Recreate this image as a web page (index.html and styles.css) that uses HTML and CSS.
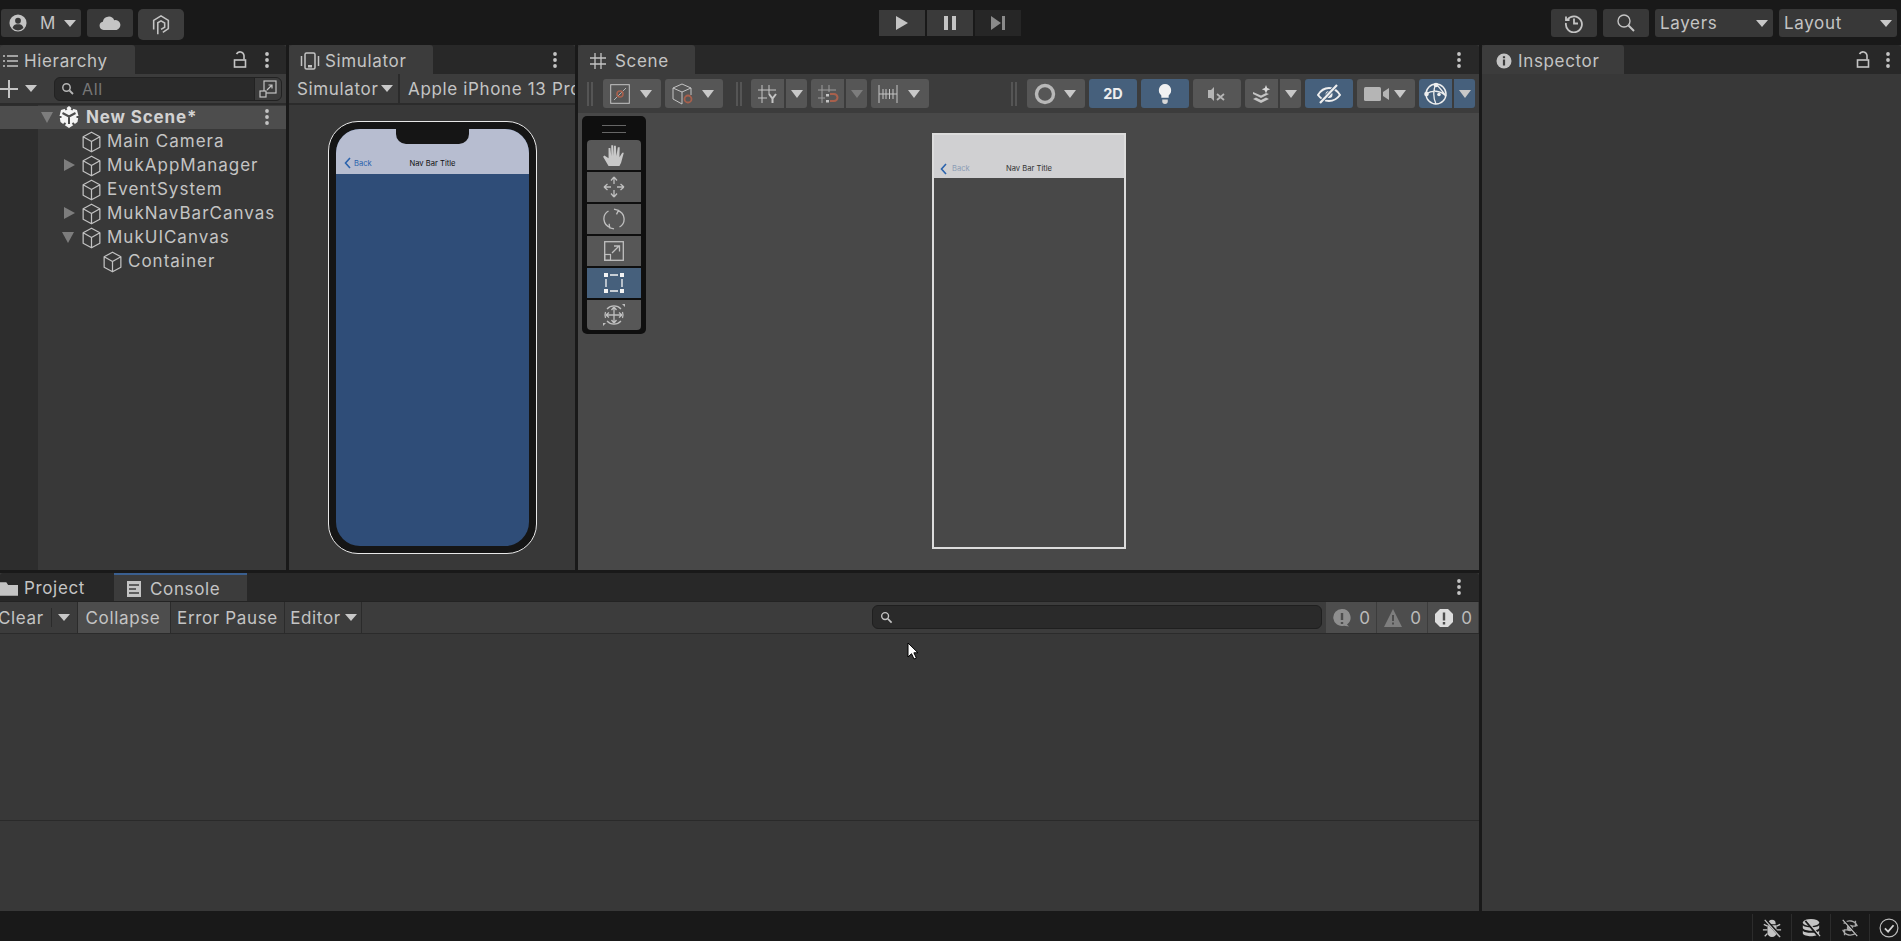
FILE: index.html
```html
<!DOCTYPE html>
<html lang="en">
<head>
<meta charset="utf-8">
<title>Unity Editor</title>
<link rel="stylesheet" href="styles.css">
</head>
<body>
<svg class="defs" width="0" height="0">
  <symbol id="cube" viewBox="0 0 20 23"><path d="M10 1.2 18.8 6v11L10 21.8 1.2 17V6ZM1.2 6 10 11l8.8-5M10 11v10.8" fill="none" stroke="#c2c2c2" stroke-width="1.3" stroke-linejoin="round"/></symbol>
  <symbol id="dots" viewBox="0 0 6 18"><circle cx="3" cy="3" r="1.9" fill="#c4c4c4"/><circle cx="3" cy="9" r="1.9" fill="#c4c4c4"/><circle cx="3" cy="15" r="1.9" fill="#c4c4c4"/></symbol>
  <symbol id="lock" viewBox="0 0 14 18"><path d="M11 8.500V4.500a4 4 0 0 0-7.500-1.500" fill="none" stroke="#c4c4c4" stroke-width="1.600"/><rect x="1.500" y="9" width="11" height="7" fill="none" stroke="#c4c4c4" stroke-width="1.600"/></symbol>
</svg>
<div class="app">
  <header class="topbar">
    <div class="top-left">
      <div class="tbtn acct">
        <svg class="i18" viewBox="0 0 20 20"><circle cx="10" cy="10" r="9.500" fill="#c4c4c4"/><circle cx="10" cy="7.500" r="3.200" fill="#383838"/><path d="M4 15.500c1-3.500 3.500-4 6-4s5 .5 6 4a8 8 0 0 1-12 0Z" fill="#383838"/></svg>
        <span class="acct-m">M</span>
        <i class="tri tri-sm"></i>
      </div>
      <div class="tbtn cloud">
        <svg class="i22" viewBox="0 0 24 18"><path d="M5 16.500a4.500 4.500 0 0 1-.8-8.900 6.500 6.500 0 0 1 12.400-1.600 5.300 5.300 0 0 1 2.600 10.500Z" fill="#c4c4c4"/></svg>
      </div>
      <div class="tbtn collab">
        <svg class="i22" viewBox="0 0 22 24"><path d="M3 17V7l8-5 8 5v9l-6 4" fill="none" stroke="#c4c4c4" stroke-width="1.700"/><path d="M7.500 22V9.500l3.500-2 4 2.300v4.700l-4 2.300" fill="none" stroke="#c4c4c4" stroke-width="1.700"/></svg>
      </div>
    </div>
    <div class="top-center">
      <div class="pbtn"><svg class="i16" viewBox="0 0 14 16"><path d="M1 1l12 7-12 7Z" fill="#c4c4c4"/></svg></div>
      <div class="pbtn"><svg class="i16" viewBox="0 0 14 16"><rect x="1" y="1" width="4" height="14" fill="#c4c4c4"/><rect x="9" y="1" width="4" height="14" fill="#c4c4c4"/></svg></div>
      <div class="pbtn pbtn-off"><svg class="i16" viewBox="0 0 16 16"><path d="M1 1l10 7-10 7Z" fill="#8a8a8a"/><rect x="12" y="1" width="3" height="14" fill="#8a8a8a"/></svg></div>
    </div>
    <div class="top-right">
      <div class="tbtn rbtn"><svg class="i20" viewBox="0 0 20 20"><path d="M3.500 6.500A8 8 0 1 1 2 10M2 3.500v3.500h3.500" fill="none" stroke="#c4c4c4" stroke-width="1.800"/><path d="M10 5.500V10.500H14" fill="none" stroke="#c4c4c4" stroke-width="1.800"/></svg></div>
      <div class="tbtn rbtn"><svg class="i20" viewBox="0 0 20 20"><circle cx="8" cy="8" r="6" fill="none" stroke="#c4c4c4" stroke-width="1.400"/><path d="M12.500 12.500 18 18" stroke="#c4c4c4" stroke-width="2"/></svg></div>
      <div class="tbtn sel"><span>Layers</span><i class="tri tri-sm"></i></div>
      <div class="tbtn sel"><span>Layout</span><i class="tri tri-sm"></i></div>
    </div>
  </header>

  <main class="workspace">
    <div class="left">
      <div class="upper">
        <section class="panel hierarchy">
          <div class="tabbar">
            <div class="tab tab-h">
              <svg class="i16 list" viewBox="0 0 16 14"><path d="M5 2h11M5 7h11M5 12h11" stroke="#c4c4c4" stroke-width="1.300"/><path d="M1 2h2M1 7h2M1 12h2" stroke="#c4c4c4" stroke-width="1.500"/></svg>
              <span>Hierarchy</span>
            </div>
            <div class="tab-actions">
              <svg class="lock" viewBox="0 0 14 18"><use href="#lock"/></svg>
              <svg class="dots" viewBox="0 0 6 18"><use href="#dots"/></svg>
            </div>
          </div>
          <div class="h-tools">
            <svg class="plus" viewBox="0 0 18 18"><path d="M9 0v18M0 9h18" stroke="#c4c4c4" stroke-width="2"/></svg>
            <i class="tri tri-sm plus-tri"></i>
            <div class="h-search">
              <svg class="mag" viewBox="0 0 14 14"><circle cx="5.500" cy="5.500" r="3.700" fill="none" stroke="#b5b5b5" stroke-width="1.500"/><path d="M8.500 8.500 12 12" stroke="#b5b5b5" stroke-width="1.800"/></svg>
              <span class="h-all">All</span>
              <div class="h-scope">
                <svg class="i18" viewBox="0 0 18 18"><rect x="5" y="1" width="12" height="12" fill="none" stroke="#c4c4c4" stroke-width="1.200"/><rect x="1" y="11" width="6" height="6" fill="#3c3c3c" stroke="#c4c4c4" stroke-width="1.200"/><path d="M8 10l5-5M9.500 5H13v3.500" fill="none" stroke="#c4c4c4" stroke-width="1.200"/></svg>
              </div>
            </div>
          </div>
          <div class="tree">
            <div class="row scene-row">
              <i class="tri tri-lg tri-dim"></i>
              <svg class="unity" viewBox="0 0 20 22"><path d="M10 0l3 2.500 5 1.500 1.500 6-1 6-4 3-4.500 3-4.500-3-4-3-1-6L2 4l5-1.500Z" fill="#f4f4f4"/><path d="M10 10.500 3.500 7M10 10.500 16.500 7M10 10.500V18M0 11h2.500M17.500 11H20M6 1.500 7.500 4M14 1.500 12.500 4M4.500 19 6.500 17M15.500 19 13.500 17" stroke="#4d4d4d" stroke-width="2"/></svg>
              <b>New Scene*</b>
              <svg class="dots row-dots" viewBox="0 0 6 18"><use href="#dots"/></svg>
            </div>
            <div class="row d1"><span class="noarrow"></span><svg class="cube"><use href="#cube"/></svg><span>Main Camera</span></div>
            <div class="row d1"><i class="tri-right"></i><svg class="cube"><use href="#cube"/></svg><span>MukAppManager</span></div>
            <div class="row d1"><span class="noarrow"></span><svg class="cube"><use href="#cube"/></svg><span>EventSystem</span></div>
            <div class="row d1"><i class="tri-right"></i><svg class="cube"><use href="#cube"/></svg><span>MukNavBarCanvas</span></div>
            <div class="row d1"><i class="tri tri-lg tri-dim arrow-down"></i><svg class="cube"><use href="#cube"/></svg><span>MukUICanvas</span></div>
            <div class="row d2"><svg class="cube"><use href="#cube"/></svg><span>Container</span></div>
          </div>
        </section>

        <section class="panel simulator">
          <div class="tabbar">
            <div class="tab tab-s">
              <svg class="i20 simi" viewBox="0 0 20 18"><rect x="5" y="1" width="10" height="16" rx="1.500" fill="none" stroke="#c4c4c4" stroke-width="1.500"/><rect x="8" y="13" width="4" height="2.500" fill="#c4c4c4"/><path d="M1.500 4v10M18.500 4v10" stroke="#c4c4c4" stroke-width="1.500"/></svg>
              <span>Simulator</span>
            </div>
            <div class="tab-actions">
              <svg class="dots" viewBox="0 0 6 18"><use href="#dots"/></svg>
            </div>
          </div>
          <div class="s-tools">
            <div class="s-drop"><span>Simulator</span><i class="tri tri-sm"></i></div>
            <div class="s-device">Apple iPhone 13 Pro</div>
          </div>
          <div class="s-body">
            <div class="phone">
              <div class="screen">
                <div class="notch"></div>
                <div class="nav nav-phone">
                  <div class="back">
                    <svg class="chev" viewBox="0 0 7 12"><path d="M6 1 1.500 6 6 11" fill="none" stroke="#2a63ad" stroke-width="1.600"/></svg>
                    <span>Back</span>
                  </div>
                  <div class="title">Nav Bar Title</div>
                </div>
              </div>
            </div>
          </div>
        </section>

        <section class="panel scene">
          <div class="tabbar">
            <div class="tab tab-sc">
              <svg class="i16" viewBox="0 0 16 16"><path d="M5 0v16M11 0v16M0 5h16M0 11h16" stroke="#c4c4c4" stroke-width="1.300"/></svg>
              <span>Scene</span>
            </div>
            <div class="tab-actions">
              <svg class="dots" viewBox="0 0 6 18"><use href="#dots"/></svg>
            </div>
          </div>
          <div class="sc-tools">
            <div class="grip"></div>
            <div class="b w58 first">
              <svg class="i20" viewBox="0 0 20 20"><rect x=".7" y=".7" width="18.600" height="18.600" fill="none" stroke="#c4c4c4" stroke-width="1"/><path d="M4 16 16 4" stroke="#b0b0b0"/><circle cx="10" cy="10" r="3" fill="none" stroke="#a8604c" stroke-width="1.600"/></svg>
              <i class="tri"></i>
            </div>
            <div class="b w58">
              <svg class="i22" viewBox="0 0 22 22"><path d="M10 1l9 4v7M10 1 1 5v11l9 5M1 5l9 4 9-4M10 9v12" fill="none" stroke="#c4c4c4" stroke-width="1"/><circle cx="16" cy="16" r="3.500" fill="none" stroke="#a8604c" stroke-width="1.800"/></svg>
              <i class="tri"></i>
            </div>
            <div class="grip g2"></div>
            <div class="b w33 g3">
              <svg class="i22" viewBox="0 0 22 20"><path d="M5 1v18M12 1v9M1 6h18M1 14h9" fill="none" stroke="#c4c4c4" stroke-width="1"/><path d="M12 10l3.500 4.500L19 10M15.500 14.500V19" fill="none" stroke="#c4c4c4" stroke-width="2"/></svg>
            </div>
            <div class="b w21 sp"><i class="tri"></i></div>
            <div class="b w33">
              <svg class="i22" viewBox="0 0 22 20"><path d="M5 1v18M12 1v7M1 6h18M1 14h7" fill="none" stroke="#9c9c9c" stroke-width="1"/><path d="M13 10h4a3 3 0 0 1 0 7h-4" fill="none" stroke="#a8604c" stroke-width="2"/><rect x="9" y="16" width="3" height="2.500" fill="#c4c4c4"/><rect x="9" y="10" width="3" height="2.500" fill="#c4c4c4"/></svg>
            </div>
            <div class="b w21 sp"><i class="tri tri-dim"></i></div>
            <div class="b w58">
              <svg class="i20" viewBox="0 0 20 20"><path d="M1 1v18M19 1v18M1 10h18M5 5v10M8 5v10M11.500 5v10M15 5v10" fill="none" stroke="#c4c4c4" stroke-width="1"/></svg>
              <i class="tri"></i>
            </div>
            <div class="spacer"></div>
            <div class="grip g4"></div>
            <div class="b w58">
              <svg class="i22" viewBox="0 0 22 22"><circle cx="11" cy="11" r="8.500" fill="none" stroke="#b8b8b8" stroke-width="3.400"/></svg>
              <i class="tri"></i>
            </div>
            <div class="b w48 on"><span class="b2d">2D</span></div>
            <div class="b w48 on ctr">
              <svg class="i22" viewBox="0 0 18 24"><path d="M9 1a7 7 0 0 1 4 12.500V16H5v-2.500A7 7 0 0 1 9 1Z" fill="#f1f1f1"/><path d="M6 18h6v2a3 3 0 0 1-6 0Z" fill="#d8d8d8"/></svg>
            </div>
            <div class="b w48 ctr">
              <svg class="i18" viewBox="0 0 18 14"><path d="M0 3h3l3-3v14l-3-3H0Z" fill="#b5b5b5"/><path d="M9 7l7 6M16 7l-7 6" stroke="#b5b5b5" stroke-width="1.800"/></svg>
            </div>
            <div class="b w33 ctr">
              <svg class="i22" viewBox="0 0 22 20"><path d="M2 10l8 4 8-4-3-1-5 2.500L2 8Zm0 5 8 4 8-4-3-1.500-5 2.500-5-2.500Z" fill="#c4c4c4"/><path d="M15 1l1.200 3 3 1.200-3 1.200L15 9.500l-1.200-3-3-1.200 3-1.200Z" fill="#d8d8d8"/></svg>
            </div>
            <div class="b w21 sp"><i class="tri"></i></div>
            <div class="b w48 on ctr">
              <svg class="i24" viewBox="0 0 24 20"><path d="M1 11c3-5 7-7 11-7s8 2 11 7c-3 4-7 6-11 6S4 15 1 11Z" fill="none" stroke="#eee" stroke-width="2"/><circle cx="12" cy="10.500" r="3.500" fill="#eee"/><path d="M3 19 20 1" stroke="#46607c" stroke-width="4"/><path d="M3 19 20 1" stroke="#eee" stroke-width="2.200"/></svg>
            </div>
            <div class="b w58">
              <svg class="camw" viewBox="0 0 26 18"><rect x="0" y="2" width="17" height="14" rx="1.500" fill="#b5b5b5"/><path d="M19 7l6-4v12l-6-4Z" fill="#b5b5b5"/></svg>
              <i class="tri"></i>
            </div>
            <div class="b w33 on ctr">
              <svg class="giz" viewBox="0 0 24 24"><circle cx="12" cy="12" r="10" fill="none" stroke="#eee" stroke-width="1.500"/><path d="M2 12c6-4 14-4 20 2M12 2c-3 5-3 14 0 20M12 2c4 4 7 8 10 12" fill="none" stroke="#eee" stroke-width="1.300"/><circle cx="12" cy="3" r="2.300" fill="#eee"/><circle cx="2.500" cy="12" r="2.300" fill="#eee"/><circle cx="15" cy="12.500" r="1.800" fill="#eee"/></svg>
            </div>
            <div class="b w21 sp on"><i class="tri"></i></div>
          </div>
          <div class="sc-body">
            <div class="tools">
              <div class="handle"></div>
              <div class="tool tool-top">
                <svg class="i24" viewBox="0 0 22 22"><path d="M6 21 1 12.500l1.200-1L6 14V4.500h1.700L8.500 12V2h1.700L11 12V2.500h1.700l.5 9.500 1.300-8h1.700L16 13l2.500-4H20l-2.500 9L16 21Z" fill="#c8c8c8"/></svg>
              </div>
              <div class="tool">
                <svg class="i24" viewBox="0 0 24 24"><path d="M12 2v7M12 15v7M2 12h7M15 12h7M12 2 9 5.500M12 2l3 3.500M12 22l-3-3.500M12 22l3-3.500M2 12l3.500-3M2 12l3.500 3M22 12l-3.500-3M22 12l-3.500 3" fill="none" stroke="#bfbfbf" stroke-width="1.300"/></svg>
              </div>
              <div class="tool">
                <svg class="i22" viewBox="0 0 22 22"><path d="M14.500 2.500a9 9 0 0 1 2 16.500M7.500 19.500a9 9 0 0 1-2-16.500M11 1.200l4.500 1.200-2 4M11 20.800l-4.500-1-.3-4" fill="none" stroke="#bfbfbf" stroke-width="1.300"/></svg>
              </div>
              <div class="tool">
                <svg class="i20" viewBox="0 0 20 20"><rect x=".7" y=".7" width="18.600" height="18.600" fill="none" stroke="#bfbfbf" stroke-width="1.300"/><rect x=".7" y="13.500" width="5.800" height="5.800" fill="none" stroke="#bfbfbf" stroke-width="1.200"/><path d="M8 12l7-7M10 5h5.500V10.500" fill="none" stroke="#bfbfbf" stroke-width="1.300"/></svg>
              </div>
              <div class="tool tool-on">
                <svg class="i22" viewBox="0 0 22 22"><path d="M7 3h8M7 19h8M3 7v8M19 7v8" stroke="#f4f4f4" stroke-width="1.300"/><rect x="1" y="1" width="4" height="4" fill="#f4f4f4"/><rect x="17" y="1" width="4" height="4" fill="#f4f4f4"/><rect x="1" y="17" width="4" height="4" fill="#f4f4f4"/><rect x="17" y="17" width="4" height="4" fill="#f4f4f4"/></svg>
              </div>
              <div class="tool tool-bot">
                <svg class="i24" viewBox="0 0 24 24"><path d="M5 6a9.500 9.500 0 0 1 14 0M19 18a9.500 9.500 0 0 1-14 0M3.500 9a9.500 9.500 0 0 0 0 6M20.500 9a9.500 9.500 0 0 1 0 6" fill="none" stroke="#bfbfbf" stroke-width="1.200"/><path d="M12 4v16M4 12h16M12 4 9.500 7M12 4l2.500 3M12 20l-2.500-3M12 20l2.500-3M4 12l3-2.500M4 12l3 2.500M20 12l-3-2.500M20 12l-3 2.500" fill="none" stroke="#bfbfbf" stroke-width="1.300"/><path d="M20 1h3v3ZM1 23v-3h3Z" fill="#bfbfbf"/></svg>
              </div>
            </div>
            <div class="canvas">
              <div class="nav nav-scene">
                <div class="back">
                  <svg class="chev" viewBox="0 0 7 12"><path d="M6 1 1.500 6 6 11" fill="none" stroke="#2a63ad" stroke-width="1.600"/></svg>
                  <span>Back</span>
                </div>
                <div class="title">Nav Bar Title</div>
              </div>
            </div>
          </div>
        </section>
      </div>

      <section class="lower">
        <div class="tabbar tabbar-low">
          <div class="ltab">
            <svg class="folder" viewBox="0 0 20 16"><path d="M0 1h7l2 3h11v12H0Z" fill="#c4c4c4"/></svg>
            <span>Project</span>
          </div>
          <div class="ltab ltab-on">
            <svg class="i16" viewBox="0 0 16 16"><rect x="1" y="0" width="14" height="16" fill="#c4c4c4"/><path d="M3 4h10M3 8h7M3 12h10" stroke="#3c3c3c" stroke-width="1.400"/></svg>
            <span>Console</span>
          </div>
          <div class="tab-actions">
            <svg class="dots" viewBox="0 0 6 18"><use href="#dots"/></svg>
          </div>
        </div>
        <div class="c-tools">
          <div class="c-clear"><span>Clear</span><i class="c-sep"></i><i class="tri tri-sm"></i></div>
          <div class="c-btn c-active">Collapse</div>
          <div class="c-btn c-err">Error Pause</div>
          <div class="c-btn c-ed"><span>Editor</span><i class="tri tri-sm"></i></div>
          <div class="c-search">
            <svg class="mag" viewBox="0 0 14 14"><circle cx="5.500" cy="5.500" r="3.700" fill="none" stroke="#c4c4c4" stroke-width="1.500"/><path d="M8.500 8.500 12.500 12.500" stroke="#c4c4c4" stroke-width="1.800"/></svg>
          </div>
          <div class="count">
            <svg class="i20" viewBox="0 0 20 20"><path d="M10 1a8.500 8.500 0 0 1 5 15.400l2 2.100-5-.8A8.500 8.500 0 1 1 10 1Z" fill="#8e8e8e"/><path d="M10 5v7M10 14v2" stroke="#4d4d4d" stroke-width="2.400"/></svg>
            <span>0</span>
          </div>
          <div class="count">
            <svg class="i20" viewBox="0 0 20 20"><path d="M10 1l9 18H1Z" fill="#7e7e7e"/><path d="M10 7v6M10 14.500v2" stroke="#4d4d4d" stroke-width="2"/></svg>
            <span>0</span>
          </div>
          <div class="count">
            <svg class="i20" viewBox="0 0 20 20"><path d="M6 1h8l5 5v8l-5 5H6l-5-5V6Z" fill="#dcdcdc"/><path d="M10 4.500v8M10 14v2.500" stroke="#4d4d4d" stroke-width="2.400"/></svg>
            <span>0</span>
          </div>
        </div>
        <div class="c-list"></div>
        <div class="c-detail"></div>
        <svg class="cursor" viewBox="0 0 12 18"><path d="M1 1v14l3.500-3.300 2.500 5.300 2.400-1-2.500-5.200H11Z" fill="#fff" stroke="#000" stroke-width="1"/></svg>
      </section>
    </div>

    <aside class="panel inspector">
      <div class="tabbar">
        <div class="tab tab-i">
          <svg class="i16" viewBox="0 0 16 16"><circle cx="8" cy="8" r="7.500" fill="#c4c4c4"/><path d="M8 6.500v6M8 3.200v2" stroke="#3c3c3c" stroke-width="2.200"/></svg>
          <span>Inspector</span>
        </div>
        <div class="tab-actions">
          <svg class="lock" viewBox="0 0 14 18"><use href="#lock"/></svg>
          <svg class="dots" viewBox="0 0 6 18"><use href="#dots"/></svg>
        </div>
      </div>
    </aside>
  </main>

  <footer class="status">
    <div class="st"><svg class="i22" viewBox="0 0 22 22"><path d="M7 6a4 4 0 0 1 8 0v1H7Zm-1 2h10v8a5 5 0 0 1-10 0Z" fill="#c4c4c4"/><path d="M6 9 2 7M16 9l4-2M6 13H1M16 13h5M6 17l-3 3M16 17l3 3" stroke="#c4c4c4" stroke-width="1.400"/><path d="M4 2l17 19" stroke="#191919" stroke-width="3"/><path d="M3 2l17 19" stroke="#c4c4c4" stroke-width="1.400"/></svg></div>
    <div class="st"><svg class="i22" viewBox="0 0 22 22"><ellipse cx="11" cy="5" rx="9" ry="4" fill="#c4c4c4"/><path d="M2 8c2 3 16 3 18 0v3c-2 4-16 4-18 0Zm0 6c2 3 16 3 18 0v3c-2 4-16 4-18 0Z" fill="#c4c4c4"/><path d="M5 3l15 18" stroke="#191919" stroke-width="2.400"/><path d="M6 2l15 18" stroke="#c4c4c4" stroke-width="1.300"/></svg></div>
    <div class="st"><svg class="i22" viewBox="0 0 22 22"><path d="M4 6a9 9 0 0 1 15 3M18 16a9 9 0 0 1-15-3M17 3v6h-6M5 19v-6h6" fill="none" stroke="#a8a8a8" stroke-width="1.500"/><circle cx="11" cy="11" r="3.500" fill="#a8a8a8"/><path d="M4 2l16 18" stroke="#191919" stroke-width="2.600"/><path d="M3 2l16 18" stroke="#c4c4c4" stroke-width="1.300"/></svg></div>
    <div class="st"><svg class="i22" viewBox="0 0 22 22"><circle cx="11" cy="11" r="9.800" fill="none" stroke="#bcbcbc" stroke-width="1.300"/><path d="M6.500 11.500 10 15l6-7" fill="none" stroke="#d4d4d4" stroke-width="2"/></svg></div>
  </footer>
</div>
</body>
</html>
```
FILE: styles.css
```css
* { box-sizing: border-box; }
html, body { margin: 0; height: 100%; }
body {
  background: #191919;
  color: #c4c4c4;
  font-family: "Inter", "Liberation Sans", sans-serif;
  font-size: 17px;
  letter-spacing: .65px;
  overflow: hidden;
}
.defs { position: absolute; }
svg { display: block; flex: none; }
i { display: block; flex: none; }
.i16 { width: 16px; height: 16px; }
.i18 { width: 18px; height: 18px; }
.i20 { width: 20px; height: 20px; }
.i22 { width: 22px; height: 22px; }
.i24 { width: 24px; height: 24px; }

.tri { width: 0; height: 0; border-left: 6px solid transparent; border-right: 6px solid transparent; border-top: 8px solid #c8c8c8; }
.tri-sm { border-left-width: 6px; border-right-width: 6px; border-top-width: 7px; }
.tri-lg { border-left-width: 6px; border-right-width: 6px; border-top-width: 11px; }
.tri-dim { border-top-color: #7d7d7d; }
.tri-right { width: 0; height: 0; border-top: 6px solid transparent; border-bottom: 6px solid transparent; border-left: 11px solid #7d7d7d; }

.app { display: flex; flex-direction: column; width: 1901px; height: 941px; }

/* Top bar */
.topbar { height: 45px; flex: none; display: grid; grid-template-columns: 1fr auto 1fr; padding: 9px 3px 0 1px; align-items: start; }
.top-left { display: flex; gap: 6px; align-items: flex-start; }
.top-center { display: flex; gap: 2px; padding-top: 1px; }
.top-right { display: flex; gap: 6px; justify-content: flex-end; padding-right: 1px; }
.tbtn { height: 28px; background: #383838; border-radius: 3px; display: flex; align-items: center; }
.acct { width: 80px; padding: 0 6px 0 8px; }
.acct-m { margin-left: 13px; margin-right: 8px; }
.cloud { width: 46px; justify-content: center; }
.collab { width: 46px; height: 31px; margin-left: -1px; justify-content: center; background: #3d3d3d; border-radius: 5px; }
.pbtn { width: 46px; height: 26px; background: #3a3a3a; display: flex; align-items: center; justify-content: center; }
.pbtn-off { background: #262626; }
.rbtn { width: 46px; justify-content: center; }
.sel { width: 118px; padding: 0 5px 0 5px; justify-content: space-between; }

/* Workspace */
.workspace { flex: 1; display: flex; gap: 3px; min-height: 0; }
.left { width: 1479px; display: flex; flex-direction: column; gap: 3px; position: relative; }
.upper { height: 525px; display: flex; gap: 3px; flex: none; }
.panel { background: #383838; display: flex; flex-direction: column; min-width: 0; }
.hierarchy { width: 286px; }
.simulator { width: 286px; }
.scene { width: 901px; }
.inspector { flex: 1; }

.tabbar { height: 29px; flex: none; background: #282828; display: flex; align-items: stretch; border-radius: 3px 3px 0 0; }
.tab { background: #3c3c3c; display: flex; align-items: center; border-radius: 3px 3px 0 0; padding-top: 2px; }
.tab-h { width: 135px; padding-left: 2px; gap: 6px; }
.tab-s { width: 144px; padding-left: 11px; gap: 5px; }
.tab-sc { width: 117px; padding-left: 12px; gap: 9px; }
.tab-i { width: 142px; padding-left: 14px; gap: 6px; }
.tab-actions { margin-left: auto; display: flex; align-items: center; gap: 17px; padding-right: 16px; }
.simulator .tab-actions, .scene .tab-actions, .tabbar-low .tab-actions { padding-right: 17px; }
.inspector .tab-actions { gap: 15px; padding-right: 10px; }
.dots { width: 6px; height: 18px; }
.lock { width: 14px; height: 18px; }

/* Hierarchy */
.h-tools { height: 31px; flex: none; background: #3c3c3c; display: flex; align-items: center; border-bottom: 2px solid #2b2b2b; }
.plus { width: 18px; height: 18px; }
.plus-tri { margin-left: 7px; }
.h-search { margin-left: 17px; width: 228px; height: 24px; background: #2a2a2a; border: 1px solid #222; border-radius: 6px; display: flex; align-items: center; padding-left: 6px; font-size: 16px; }
.mag { width: 14px; height: 14px; }
.h-all { margin-left: 7px; color: #777; }
.h-scope { margin-left: auto; width: 27px; height: 22px; background: #3c3c3c; border-left: 1px solid #222; border-radius: 0 5px 5px 0; display: flex; align-items: center; justify-content: center; }
.tree { flex: 1; background: linear-gradient(90deg, #2d2d2d 38px, #383838 38px); padding-top: 1px; }
.row { height: 24px; display: flex; align-items: center; letter-spacing: 1px; }
.scene-row { height: 23px; background: #4d4d4d; padding-left: 41px; padding-bottom: 1px; letter-spacing: .85px; }
.scene-row b { margin-left: 8px; font-weight: 700; color: #d2d2d2; }
.unity { width: 20px; height: 22px; margin-left: 6px; margin-right: -1px; }
.row-dots { margin-left: auto; margin-right: 16px; }
.d1 { padding-left: 62px; }
.d2 { padding-left: 103px; }
.noarrow { width: 12px; margin-right: 8px; }
.tri-right { margin-right: 7px; margin-left: 2px; }
.arrow-down { margin-right: 8px; }
.cube { width: 19px; height: 22px; margin-right: 6px; margin-top: 1px; }

/* Simulator */
.s-tools { height: 31px; flex: none; display: flex; align-items: center; background: #3c3c3c; border-bottom: 2px solid #2b2b2b; overflow: hidden; }
.s-drop { width: 111px; flex: none; height: 100%; display: flex; align-items: center; gap: 3px; padding-left: 8px; border-right: 2px solid #2b2b2b; }
.s-device { padding-left: 8px; white-space: nowrap; }
.simi { margin-top: 1px; }
.s-body { flex: 1; padding: 16px 0 0 39px; }
.phone { width: 209px; height: 433px; border: 1px solid #e8e8e8; border-radius: 30px; background: #151515; padding: 7px; }
.screen { position: relative; height: 417px; background: #2f4d78; border-radius: 24px; overflow: hidden; }
.notch { position: absolute; left: 60px; top: 0; width: 73px; height: 15px; background: #151515; border-radius: 0 0 10px 10px; }
.nav { display: grid; grid-template-columns: 1fr auto 1fr; align-items: center; font-size: 7.600px; letter-spacing: 0; }
.nav-phone { height: 45px; background: #b7bdd0; padding: 27px 0 4px 8px; }
.nav-phone .title { color: #111; margin-left: -8px; }
.back { display: flex; align-items: center; gap: 3px; color: #2a63ad; }
.chev { width: 7px; height: 12px; }

/* Scene */
.sc-tools { height: 39px; flex: none; background: #3c3c3c; display: flex; align-items: center; padding: 0 4px 0 9px; }
.grip { width: 6px; height: 24px; border-left: 2px solid #555; border-right: 2px solid #555; }
.g2 { margin-left: 13px; }
.g4 { margin-right: 6px; }
.spacer { flex: 1; }
.b { height: 29px; background: #565656; border-radius: 3px; display: flex; align-items: center; margin-left: 4px; }
.b.g3 { margin-left: 9px; }
.first { margin-left: 10px; }
.sp { margin-left: 2px; justify-content: center; border-radius: 0 3px 3px 0; }
.w58 { width: 58px; justify-content: space-between; padding: 0 9px 0 7px; }
.w48 { width: 48px; justify-content: center; }
.w33 { width: 33px; justify-content: center; border-radius: 3px 0 0 3px; }
.w21 { width: 21px; }
.on { background: #46607c; }
.ctr { justify-content: center; }
.b2d { font-weight: 700; font-size: 14.500px; color: #eee; letter-spacing: 0; }
.camw { width: 26px; height: 18px; }
.giz { width: 24px; height: 24px; }
.sc-body { flex: 1; background: #484848; position: relative; padding: 20px 0 0 354px; }
.tools { position: absolute; left: 4px; top: 3px; width: 64px; height: 218px; background: #0f0f0f; border-radius: 5px; padding: 0 5px; display: flex; flex-direction: column; gap: 2px; }
.handle { height: 22px; margin: 0 15px; flex: none; }
.handle::before { content: ""; display: block; height: 6px; margin-top: 9px; border-top: 1px solid #666; border-bottom: 1px solid #666; }
.tool { height: 30px; flex: none; background: #575757; display: flex; align-items: center; justify-content: center; }
.tool-top { border-radius: 4px 4px 0 0; }
.tool-bot { border-radius: 0 0 4px 4px; }
.tool-on { background: #46607c; }
.canvas { width: 194px; height: 416px; border: 2px solid #dcdcdc; }
.nav-scene { height: 43px; background: #d0d0d2; padding: 27px 0 3px 6px; }
.nav-scene .title { color: #333; margin-left: -6px; }
.nav-scene .back span { color: #8c9db5; margin-left: 2px; }

/* Lower */
.lower { flex: 1; background: #383838; display: flex; flex-direction: column; position: relative; min-height: 0; }
.tabbar-low { height: 29px; border-bottom: 1px solid #232323; }
.ltab { display: flex; align-items: center; width: 114px; gap: 6px; padding-top: 2px; }
.folder { width: 18px; height: 15px; }
.ltab-on { width: 133px; background: #3c3c3c; border-top: 2px solid #3a5f90; padding: 1px 0 0 12px; gap: 8px; }
.c-tools { height: 32px; flex: none; display: flex; background: #3c3c3c; border-bottom: 1px solid #2b2b2b; }
.c-clear { width: 78px; display: flex; align-items: center; border-right: 1px solid #2b2b2b; overflow: hidden; }
.c-clear span { margin-left: -2px; width: 53px; flex: none; }
.c-sep { width: 1px; height: 19px; background: #2b2b2b; }
.c-clear .tri { margin-left: 6px; }
.c-btn { display: flex; align-items: center; justify-content: center; border-right: 1px solid #2b2b2b; }
.c-active { width: 93px; background: #4d4d4d; padding-right: 2px; }
.c-err { width: 114px; }
.c-ed { width: 77px; gap: 4px; padding-left: 1px; }
.c-search { margin-left: 510px; width: 450px; height: 24px; margin-top: 3px; background: #2a2a2a; border: 1px solid #1f1f1f; border-radius: 6px; display: flex; align-items: center; padding-left: 7px; }
.c-search .mag { width: 13px; height: 13px; }
.count { width: 50px; margin-left: 1px; background: #4d4d4d; display: flex; align-items: center; justify-content: center; gap: 7px; color: #bbb; padding-left: 1px; }
.c-search + .count { margin-left: 4px; }
.c-list { height: 187px; flex: none; border-bottom: 1px solid #2a2a2a; }
.c-detail { flex: 1; }
.cursor { position: absolute; left: 907px; top: 69px; width: 12px; height: 18px; }

/* Status */
.status { height: 30px; flex: none; display: flex; justify-content: flex-end; align-items: flex-end; }
.st { width: 39px; height: 27px; border-left: 1px solid #2c2c2c; display: flex; align-items: center; padding-left: 9px; }
.st:last-child { width: 32px; }
.st .i22 { width: 20px; height: 20px; }
```
